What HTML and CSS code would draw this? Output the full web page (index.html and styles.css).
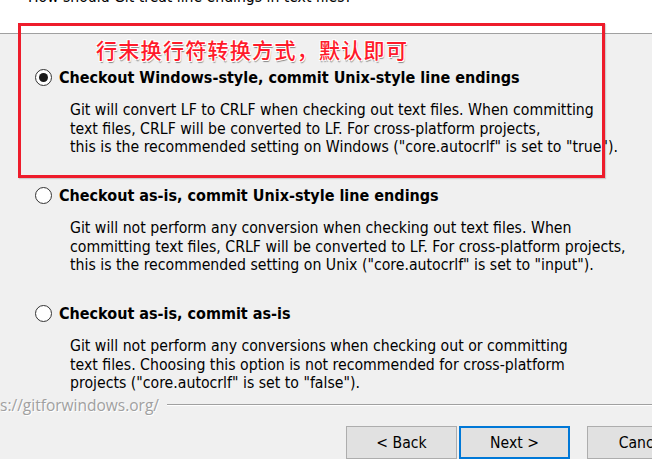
FILE: index.html
```html
<!DOCTYPE html>
<html lang="en">
<head>
<meta charset="utf-8">
<title>Git Setup - Line Ending Conversions</title>
<link rel="stylesheet" href="styles.css">
</head>
<body>
<div class="window">
  <header class="head">
    <p class="question">How should Git treat line endings in text files?</p>
  </header>
  <main class="options">
    <section class="option">
      <div class="label"><span class="radio checked"></span><span>Checkout Windows-style, commit Unix-style line endings</span></div>
      <p class="desc">Git will convert LF to CRLF when checking out text files. When committing<br>text files, CRLF will be converted to LF. For cross-platform projects,<br>this is the recommended setting on Windows ("core.autocrlf" is set to "true").</p>
    </section>
    <section class="option">
      <div class="label"><span class="radio"></span><span>Checkout as-is, commit Unix-style line endings</span></div>
      <p class="desc">Git will not perform any conversion when checking out text files. When<br>committing text files, CRLF will be converted to LF. For cross-platform projects,<br>this is the recommended setting on Unix ("core.autocrlf" is set to "input").</p>
    </section>
    <section class="option">
      <div class="label"><span class="radio"></span><span>Checkout as-is, commit as-is</span></div>
      <p class="desc">Git will not perform any conversions when checking out or committing<br>text files. Choosing this option is not recommended for cross-platform<br>projects ("core.autocrlf" is set to "false").</p>
    </section>
  </main>
  <div class="brand"><span class="url">s://gitforwindows.org/</span><span class="rule"></span></div>
  <div class="buttons">
    <button class="btn">&lt; Back</button>
    <button class="btn primary">Next &gt;</button>
    <button class="btn cancel">Cancel</button>
  </div>
  <div class="annotation"></div>
  <div class="note">行末换行符转换方式，默认即可</div>
</div>
</body>
</html>
```

FILE: styles.css
```css
html, body {
  margin: 0;
  padding: 0;
}
body {
  background: #f0f0f0;
  font-family: "DejaVu Sans Condensed", "DejaVu Sans", sans-serif;
  font-stretch: condensed;
  color: #000;
}
.window {
  position: relative;
  width: 652px;
  height: 459px;
  overflow: hidden;
  background: #f0f0f0;
}
.head {
  display: flow-root;
  height: 33px;
  background: #fff;
  border-bottom: 1px solid #a0a0a0;
}
.question {
  margin: -12px 0 0 28px;
  font-size: 15.6px;
  line-height: 18px;
  white-space: nowrap;
}
.options {
  display: flex;
  flex-direction: column;
  gap: 29.5px;
  padding: 34px 0 0 35px;
}
.option {
  display: flex;
  flex-direction: column;
  gap: 15px;
}
.label {
  display: flex;
  align-items: center;
  gap: 7px;
  height: 18px;
  font-weight: bold;
  font-size: 16px;
  white-space: nowrap;
}
.radio {
  box-sizing: border-box;
  width: 17px;
  height: 17px;
  flex: none;
  border: 1px solid #333;
  border-radius: 50%;
  background: #fff;
  display: flex;
  align-items: center;
  justify-content: center;
}
.radio.checked::after {
  content: "";
  width: 9px;
  height: 9px;
  border-radius: 50%;
  background: #1a1a1a;
}
.desc {
  margin: 0 0 0 35px;
  font-size: 15.7px;
  line-height: 18.5px;
  white-space: nowrap;
  color: #000;
}
.brand {
  display: flex;
  align-items: center;
  gap: 8px;
  height: 16px;
  margin-top: 4px;
}
.url {
  font-family: "Open Sans", sans-serif;
  font-stretch: normal;
  font-size: 15.5px;
  color: #a0a0a0;
  text-shadow: 1px 1px 0 #fff;
  white-space: nowrap;
}
.rule {
  flex: 1;
  height: 1px;
  background: #a0a0a0;
  border-bottom: 1px solid #fff;
}
.buttons {
  display: flex;
  margin-top: 13.5px;
  padding-left: 346px;
  gap: 2px;
}
.btn {
  box-sizing: border-box;
  width: 111px;
  height: 33px;
  flex: none;
  background: #e1e1e1;
  border: 1px solid #adadad;
  font-family: inherit;
  font-stretch: condensed;
  font-size: 15.6px;
  color: #000;
  padding: 0;
}
.btn.primary {
  border: 2px solid #0078d7;
}
.btn.cancel {
  margin-left: 15px;
}
.annotation {
  position: absolute;
  left: 18px;
  top: 23px;
  width: 587px;
  height: 155px;
  box-sizing: border-box;
  border: 3px solid #ee1c2b;
  box-shadow: 1px 1px 1px rgba(0, 0, 0, 0.15);
}
.note {
  position: absolute;
  left: 96px;
  top: 37px;
  font-family: "Noto Sans CJK SC", sans-serif;
  font-weight: 500;
  font-size: 21px;
  line-height: 24px;
  letter-spacing: 1.3px;
  color: #ff1a2a;
  text-shadow: 1px 1px 0 #fff, -1px -1px 0 #fff, 1px -1px 0 #fff, -1px 1px 0 #fff, 1px 2px 1px #888;
  white-space: nowrap;
}
```
